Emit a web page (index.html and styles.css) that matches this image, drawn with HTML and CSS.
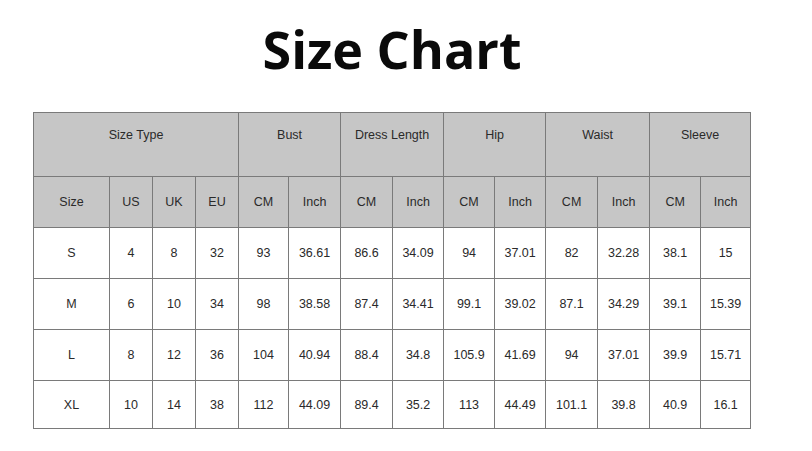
FILE: index.html
```html
<!DOCTYPE html>
<html>
<head>
<meta charset="utf-8">
<link rel="stylesheet" href="styles.css">
</head>
<body>
<div class="page">
  <h1 class="title">Size Chart</h1>
  <table class="chart">
    <colgroup>
      <col class="c-size"><col class="c-s"><col class="c-s"><col class="c-s">
      <col class="c-m1"><col class="c-m2"><col class="c-m3"><col class="c-m4"><col class="c-m5">
      <col class="c-m6"><col class="c-m7"><col class="c-m8"><col class="c-m9"><col class="c-m10">
    </colgroup>
    <thead>
      <tr class="group">
        <th colspan="4">Size Type</th>
        <th colspan="2">Bust</th>
        <th colspan="2">Dress Length</th>
        <th colspan="2">Hip</th>
        <th colspan="2">Waist</th>
        <th colspan="2">Sleeve</th>
      </tr>
      <tr class="sub">
        <th>Size</th><th>US</th><th>UK</th><th>EU</th>
        <th>CM</th><th>Inch</th><th>CM</th><th>Inch</th><th>CM</th><th>Inch</th>
        <th>CM</th><th>Inch</th><th>CM</th><th>Inch</th>
      </tr>
    </thead>
    <tbody>
      <tr><td>S</td><td>4</td><td>8</td><td>32</td><td>93</td><td>36.61</td><td>86.6</td><td>34.09</td><td>94</td><td>37.01</td><td>82</td><td>32.28</td><td>38.1</td><td>15</td></tr>
      <tr><td>M</td><td>6</td><td>10</td><td>34</td><td>98</td><td>38.58</td><td>87.4</td><td>34.41</td><td>99.1</td><td>39.02</td><td>87.1</td><td>34.29</td><td>39.1</td><td>15.39</td></tr>
      <tr><td>L</td><td>8</td><td>12</td><td>36</td><td>104</td><td>40.94</td><td>88.4</td><td>34.8</td><td>105.9</td><td>41.69</td><td>94</td><td>37.01</td><td>39.9</td><td>15.71</td></tr>
      <tr class="last"><td>XL</td><td>10</td><td>14</td><td>38</td><td>112</td><td>44.09</td><td>89.4</td><td>35.2</td><td>113</td><td>44.49</td><td>101.1</td><td>39.8</td><td>40.9</td><td>16.1</td></tr>
    </tbody>
  </table>
</div>
</body>
</html>
```

FILE: styles.css
```css
html, body {
  margin: 0;
  padding: 0;
  background: #ffffff;
}

.page {
  width: 718px;
  padding-left: 33px;
}

.title {
  margin: 0;
  padding-top: 19px;
  height: 112px;
  box-sizing: border-box;
  text-align: center;
  font-family: "Open Sans", "Noto Sans", sans-serif;
  font-weight: 700;
  font-size: 52px;
  line-height: 60px;
  color: #0a0a0a;
  letter-spacing: 0;
}

.chart {
  border-collapse: collapse;
  table-layout: fixed;
  width: 718px;
  font-family: "Liberation Sans", Arial, sans-serif;
  font-size: 12.5px;
  color: #2a2a2a;
}

.c-size { width: 76px; }
.c-s { width: 43px; }
.c-m1 { width: 50px; }
.c-m2 { width: 52px; }
.c-m3 { width: 52px; }
.c-m4 { width: 51px; }
.c-m5 { width: 51px; }
.c-m6 { width: 51px; }
.c-m7 { width: 52px; }
.c-m8 { width: 52px; }
.c-m9 { width: 51px; }
.c-m10 { width: 50px; }

.chart th,
.chart td {
  border: 1px solid #7a7a7a;
  padding: 0;
  text-align: center;
  font-weight: 400;
}

.chart th {
  background: #c6c6c6;
}

.group th {
  height: 64px;
  vertical-align: top;
  padding-top: 15px;
  box-sizing: border-box;
}

.sub th {
  height: 50px;
  vertical-align: middle;
}

.chart td {
  height: 50px;
  vertical-align: middle;
}

.chart .last td {
  height: 47px;
}
```
